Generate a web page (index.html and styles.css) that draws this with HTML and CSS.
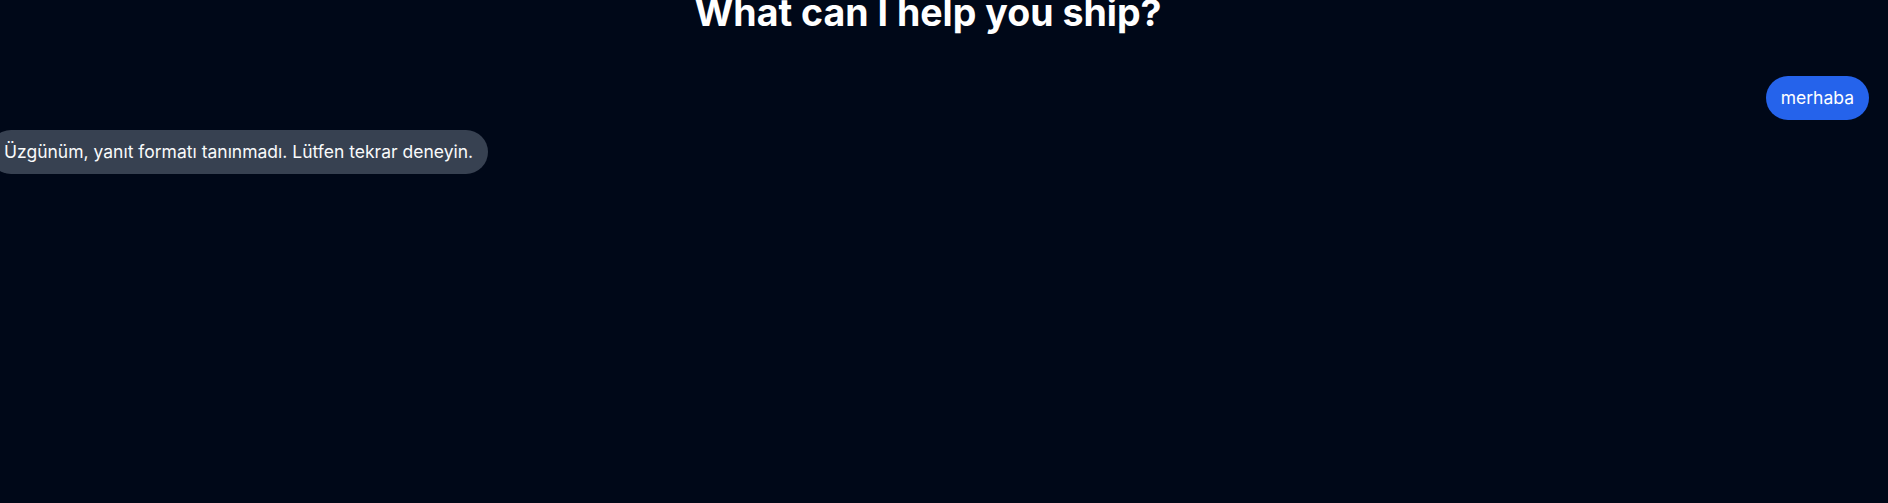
FILE: index.html
```html
<!DOCTYPE html>
<html lang="tr">
<head>
<meta charset="utf-8">
<title>Chat</title>
<link rel="stylesheet" href="styles.css">
</head>
<body>
<main class="page">
  <h1 class="title">What can I help you ship?</h1>
  <section class="messages">
    <div class="msg msg-user"><span class="bubble bubble-user">merhaba</span></div>
    <div class="msg msg-bot"><span class="bubble bubble-bot">Üzgünüm, yanıt formatı tanınmadı. Lütfen tekrar deneyin.</span></div>
  </section>
</main>
</body>
</html>
```
FILE: styles.css
```css
html, body {
  margin: 0;
  padding: 0;
  background: #000818;
  height: 100%;
  overflow: hidden;
}
body {
  font-family: Inter, "Noto Sans", sans-serif;
  color: #ffffff;
}
.page {
  display: flex;
  flex-direction: column;
}
.title {
  margin: -7px 0 0 0;
  padding-right: 32px;
  font-size: 37.5px;
  line-height: 40px;
  font-weight: 700;
  text-align: center;
  color: #ffffff;
}
.messages {
  display: flex;
  flex-direction: column;
  gap: 10px;
  margin-top: 43px;
  margin-left: -11px;
  padding-right: 19px;
}
.msg {
  display: flex;
}
.msg-user {
  justify-content: flex-end;
}
.msg-bot {
  justify-content: flex-start;
}
.bubble {
  display: inline-block;
  padding: 10px 15px;
  border-radius: 22px;
  font-size: 17.5px;
  line-height: 24px;
}
.bubble-user {
  background: #2563eb;
  color: #ffffff;
}
.bubble-bot {
  background: #374151;
  color: #f9fafb;
}
```
